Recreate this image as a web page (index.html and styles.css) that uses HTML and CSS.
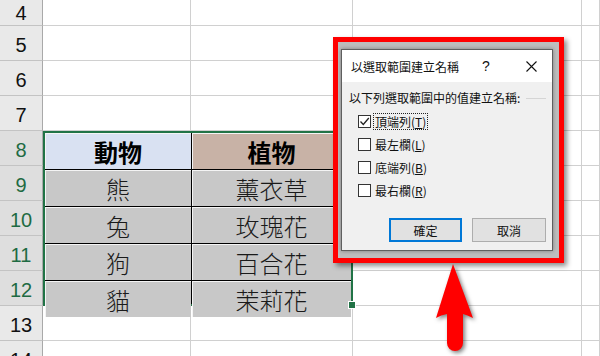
FILE: index.html
```html
<!DOCTYPE html>
<html lang="zh-Hant">
<head>
<meta charset="utf-8">
<title>以選取範圍建立名稱</title>
<link rel="stylesheet" href="styles.css">
</head>
<body>
<div class="sheet">
  <div class="rh first">4</div><div class="c"></div><div class="c"></div><div class="c"></div><div class="c"></div>
  <div class="rh">5</div><div class="c"></div><div class="c"></div><div class="c"></div><div class="c"></div>
  <div class="rh">6</div><div class="c"></div><div class="c"></div><div class="c"></div><div class="c"></div>
  <div class="rh">7</div><div class="c"></div><div class="c"></div><div class="c"></div><div class="c"></div>
  <div class="rh sel">8</div>
  <div class="tbl">
    <div class="tc head-a">動物</div><div class="tc head-b">植物</div>
    <div class="tc">熊</div><div class="tc">薰衣草</div>
    <div class="tc">兔</div><div class="tc">玫瑰花</div>
    <div class="tc">狗</div><div class="tc">百合花</div>
    <div class="tc">貓</div><div class="tc">茉莉花</div>
    <span class="handle"></span>
  </div>
  <div class="c"></div><div class="c"></div>
  <div class="rh sel">9</div><div class="c"></div><div class="c"></div>
  <div class="rh sel">10</div><div class="c"></div><div class="c"></div>
  <div class="rh sel">11</div><div class="c"></div><div class="c"></div>
  <div class="rh sel">12</div><div class="c"></div><div class="c"></div>
  <div class="rh">13</div><div class="c"></div><div class="c"></div><div class="c"></div><div class="c"></div>
  <div class="rh">14</div><div class="c"></div><div class="c"></div><div class="c"></div><div class="c"></div>
</div>

<div class="frame">
  <div class="dialog">
    <div class="titlebar">
      <span class="title">以選取範圍建立名稱</span>
      <span class="help">?</span>
      <span class="close"><svg width="11" height="11" viewBox="0 0 11 11"><path d="M0.5 0.5 L10.5 10.5 M10.5 0.5 L0.5 10.5" stroke="#111" stroke-width="1.1" fill="none"/></svg></span>
    </div>
    <div class="body">
      <div class="group"><span>以下列選取範圍中的值建立名稱:</span><span class="gline"></span></div>
      <div class="opts">
        <div class="opt"><span class="box"><svg width="11" height="11" viewBox="0 0 11 11"><path d="M1.5 5.5 L4.3 8.5 L9.8 2" stroke="#222" stroke-width="1.3" fill="none"/></svg></span><span class="lbl focus">頂端列(<u>T</u>)</span></div>
        <div class="opt"><span class="box"></span><span class="lbl">最左欄(<u>L</u>)</span></div>
        <div class="opt"><span class="box"></span><span class="lbl">底端列(<u>B</u>)</span></div>
        <div class="opt"><span class="box"></span><span class="lbl">最右欄(<u>R</u>)</span></div>
      </div>
      <div class="buttons">
        <span class="btn primary">確定</span>
        <span class="btn">取消</span>
      </div>
    </div>
  </div>
</div>

<svg class="arrow" width="60" height="98" viewBox="425 258 60 98">
  <path d="M453 264 L473 318 Q467 315 463 314 L463 343 A8 8 0 0 1 447 343 L447 314 Q441 315 436 318 Z" fill="#ff0000"/>
</svg>
</body>
</html>
```

FILE: styles.css
```css
html, body {
  margin: 0;
  padding: 0;
  background: #ffffff;
  overflow: hidden;
}
body {
  width: 600px;
  height: 356px;
  position: relative;
  font-family: "Noto Sans CJK TC", "Liberation Sans", sans-serif;
}
.sheet {
  display: grid;
  grid-template-columns: 43px 148px 162px 229px 1fr;
  grid-template-rows: 26px repeat(10, 35px);
  height: 356px;
  overflow: hidden;
}
.rh {
  box-sizing: border-box;
  background: #e9e9e9;
  border-right: 1px solid #a9a9a9;
  border-bottom: 1px solid #c3c3c3;
  font-family: "Liberation Sans", Arial, sans-serif;
  font-size: 20px;
  line-height: 20px;
  color: #111;
  display: flex;
  align-items: center;
  justify-content: center;
  padding-top: 3px;
}
.rh.first {
  padding-top: 1px;
}
.rh.sel {
  background: #dedede;
  color: #1e6b43;
}
.c {
  box-sizing: border-box;
  border-right: 1px solid #d0d0d0;
  border-bottom: 1px solid #d0d0d0;
}
.tbl {
  grid-column: span 2;
  grid-row: span 5;
  position: relative;
  box-sizing: border-box;
  border: 2px solid #217346;
  background: #000;
  display: grid;
  grid-template-columns: 146px 1fr;
  grid-template-rows: repeat(5, 1fr);
  gap: 1px;
}
.tc {
  background: #c8c8c8;
  box-shadow: inset 1px 1px 0 #f4f4f4;
  display: flex;
  align-items: center;
  justify-content: center;
  font-size: 24px;
  font-weight: 300;
  color: #1a1a1a;
  padding-top: 1px;
}
.head-a {
  background: #d9e1f2;
  font-weight: bold;
  color: #000;
}
.head-b {
  background: #c8b2a6;
  font-weight: bold;
  color: #000;
}
.handle {
  position: absolute;
  right: -5px;
  bottom: -5px;
  width: 6px;
  height: 6px;
  background: #217346;
  border: 1px solid #fff;
}
.frame {
  position: absolute;
  left: 333px;
  top: 37px;
  width: 231px;
  height: 226px;
  box-sizing: border-box;
  border: 5px solid #ff0000;
  padding: 7px 6px 7px 3px;
  background: #bdbdbd;
  box-shadow: 3px 3px 5px rgba(0, 0, 0, 0.45);
  display: flex;
}
.dialog {
  flex: 1;
  display: flex;
  flex-direction: column;
  border: 1px solid #5f5f5f;
  background: #f0f0f0;
  font-size: 12px;
  color: #111;
  box-shadow: 0 0 4px rgba(0, 0, 0, 0.35);
}
.titlebar {
  height: 32px;
  background: #ffffff;
  display: flex;
  align-items: center;
  padding-left: 9px;
  padding-right: 6px;
}
.title {
  font-size: 12px;
}
.help {
  margin-left: auto;
  width: 20px;
  text-align: center;
  font-family: "Liberation Sans", Arial, sans-serif;
  font-size: 14px;
}
.close {
  margin-left: 20px;
  width: 30px;
  display: flex;
  justify-content: center;
}
.body {
  flex: 1;
  display: flex;
  flex-direction: column;
  padding: 8px 6px 8px 7px;
}
.group {
  display: flex;
  align-items: center;
  height: 16px;
  line-height: 16px;
}
.gline {
  flex: 1;
  margin-left: 6px;
  border-top: 1px solid #d5d5d5;
  margin-top: 1px;
}
.opts {
  margin-top: 4px;
  padding-left: 9px;
}
.opt {
  height: 23px;
  display: flex;
  align-items: center;
}
.box {
  width: 11px;
  height: 11px;
  border: 1px solid #333;
  background: #fff;
  display: flex;
}
.lbl {
  margin-left: 3px;
  line-height: 15px;
  padding: 0 1px;
}
.lbl u {
  text-decoration: underline;
}
.focus {
  outline: 1px dotted #222;
}
.buttons {
  margin-top: auto;
  display: flex;
  justify-content: flex-end;
  gap: 10px;
}
.btn {
  box-sizing: border-box;
  width: 74px;
  height: 24px;
  border: 1px solid #adadad;
  background: #e1e1e1;
  display: flex;
  align-items: center;
  justify-content: center;
}
.btn.primary {
  width: 73px;
  border: 2px solid #0078d7;
}
.arrow {
  position: absolute;
  left: 425px;
  top: 258px;
  filter: drop-shadow(2px 2px 2px rgba(0, 0, 0, 0.5));
}
```
